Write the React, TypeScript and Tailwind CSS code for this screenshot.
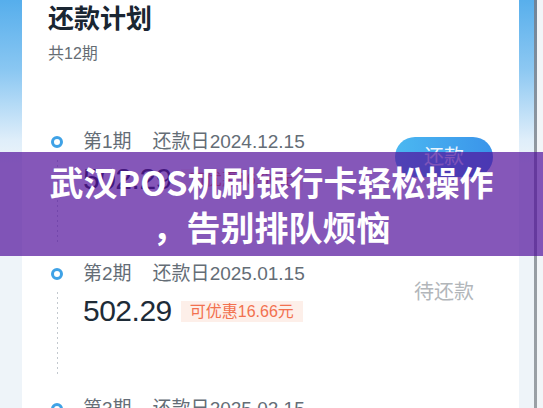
import React from 'react';

const body = { fontFamily: '"Liberation Sans", "Noto Sans CJK SC", sans-serif' };
const cjk = { fontFamily: '"Noto Sans CJK SC", "Liberation Sans", sans-serif' };

type Row = {
  no: number;
  date: string;
  amount: string;
  discount: string;
  pay?: boolean;
};

const rows: Row[] = [
  { no: 1, date: '2024.12.15', amount: '502.29', discount: '16.66', pay: true },
  { no: 2, date: '2025.01.15', amount: '502.29', discount: '16.66' },
  { no: 3, date: '2025.02.15', amount: '502.29', discount: '16.66' },
];

function PlanRow({ row }: { row: Row }) {
  return (
    <div className={`flex shrink-0 pl-[24px] ${row.no === 2 ? 'h-[135px]' : 'h-[132px]'}`}>
      {/* timeline */}
      <div className="flex w-[22px] flex-col items-center">
        <div className="flex h-[24px] items-center">
          <div className="h-[12px] w-[12px] rounded-full border-[3px] border-[#3fa2e6]" />
        </div>
        <div className="mt-[6px] h-[84px] w-px bg-[repeating-linear-gradient(to_bottom,#c3c9cf_0_2px,transparent_2px_5px)]" />
      </div>

      <div className="ml-[15px] flex flex-col">
        <div className="flex text-[19px] leading-[24px] text-[#646d76]">
          <span>第{row.no}期</span>
          <span className="ml-[21px]">还款日{row.date}</span>
        </div>
        <div className="mt-[5px] flex h-[40px] items-center">
          <span className="text-[30px] leading-[40px] tracking-[-0.5px] text-[#1e2b37]">{row.amount}</span>
          <span className="ml-[9px] bg-[#fdefe9] px-[9px] text-[16px] leading-[21px] text-[#f2714f]">
            可优惠{row.discount}元
          </span>
        </div>
      </div>

      <div className="ml-auto mr-[26px] flex w-[98px] flex-col items-center">
        {row.pay ? (
          <div className="mt-[7px] flex h-[40px] w-[98px] items-center justify-center rounded-full bg-[linear-gradient(to_right,#4bb8f1,#3a94ea)] text-[20px] text-white/90">
            还款
          </div>
        ) : (
          <div className="mt-[16px] text-[20px] leading-[28px] text-[#b2b6ba]">待还款</div>
        )}
      </div>
    </div>
  );
}

export default function App() {
  return (
    <div className="relative flex h-[408px] w-[543px] overflow-hidden bg-[#eef4f9]" style={body}>
      {/* left background strip */}
      <div className="w-[22px] shrink-0 bg-[linear-gradient(to_bottom,#56aeec_0px,#8ac7f2_70px,#dfeefa_140px,#eef4f9_165px)]" />

      {/* card */}
      <div className="flex w-[497px] shrink-0 flex-col bg-white">
        <div className="pl-[26px] pt-[3px]">
          <div className="text-[26px] font-bold leading-[32px] text-[#1a2632]">还款计划</div>
          <div className="mt-[9px] text-[16px] leading-[20px] text-[#666d74]">共12期</div>
        </div>
        <div className="mx-[3px] mt-[26px] h-px bg-[#eff1f3]" />
        <div className="mt-[40px] flex flex-col">
          {rows.map((r) => (
            <PlanRow key={r.no} row={r} />
          ))}
        </div>
      </div>

      {/* right edge */}
      <div className="w-[15px] shrink-0 bg-[linear-gradient(to_bottom,#58afec_0px,#8dc8f2_70px,#dfeefa_140px,#eef4f9_165px)]" />
      <div className="w-[3px] shrink-0 bg-[linear-gradient(to_bottom,#6f8499,#939aa1_160px,#9aa0a6)]" />
      <div className="w-[6px] shrink-0 bg-[#f2f5f8]" />

      {/* title banner */}
      <div
        className="absolute left-0 right-0 top-[152px] flex h-[104px] flex-col items-center justify-center bg-[rgba(81,15,155,0.7)] text-[34px] font-bold leading-[45px] text-white"
        style={cjk}
      >
        <div>武汉POS机刷银行卡轻松操作</div>
        <div>，告别排队烦恼</div>
      </div>
    </div>
  );
}
